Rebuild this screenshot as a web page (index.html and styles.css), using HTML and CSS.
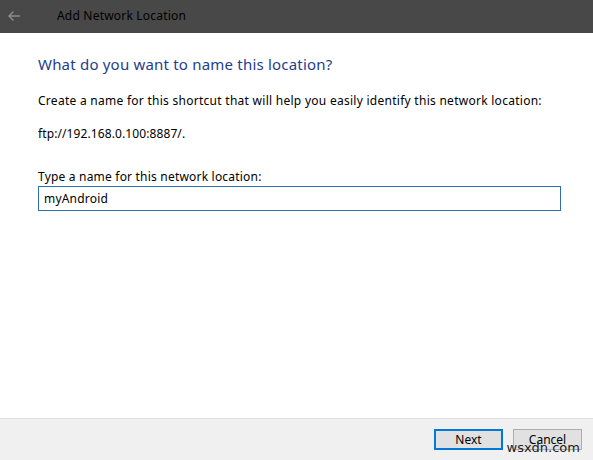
FILE: index.html
```html
<!DOCTYPE html>
<html>
<head>
<meta charset="utf-8">
<link rel="stylesheet" href="styles.css">
</head>
<body>
<div class="window">
  <div class="titlebar">
    <svg class="back" width="14" height="12" viewBox="0 0 14 12">
      <path d="M13 6H2M6.5 1.5L2 6l4.5 4.5" fill="none" stroke="#8c8c8c" stroke-width="1.4"/>
    </svg>
    <span class="title">Add Network Location</span>
  </div>
  <div class="content">
    <h1 class="heading">What do you want to name this location?</h1>
    <p class="text">Create a name for this shortcut that will help you easily identify this network location:</p>
    <p class="text url">ftp://192.168.0.100:8887/.</p>
    <label class="label" for="name">Type a name for this network location:</label>
    <input class="field" id="name" type="text" value="myAndroid">
  </div>
  <div class="footer">
    <button class="btn primary">Next</button>
    <button class="btn">Cancel</button>
    <span class="watermark">wsxdn.com</span>
  </div>
</div>
</body>
</html>
```
FILE: styles.css
```css
html, body {
  margin: 0;
  padding: 0;
  width: 593px;
  height: 460px;
  overflow: hidden;
  background: #ffffff;
}
.window {
  width: 593px;
  height: 460px;
  display: flex;
  flex-direction: column;
  font-family: "Noto Sans", "Open Sans", sans-serif;
  font-size: 12px;
  color: #000;
}
.titlebar {
  height: 33px;
  background: #484848;
  display: flex;
  align-items: center;
  flex-shrink: 0;
}
.back {
  margin-left: 7px;
  margin-top: -2px;
}
.title {
  margin-left: 36px;
  font-size: 12px;
  letter-spacing: 0.2px;
  color: #000;
  margin-top: -2px;
}
.content {
  flex: 1;
  padding: 20px 32px 0 38px;
  display: flex;
  flex-direction: column;
  align-items: flex-start;
}
.heading {
  margin: 0;
  font-size: 15px;
  letter-spacing: 0.2px;
  font-weight: normal;
  color: #1f3d8f;
  line-height: 22px;
}
.text {
  margin: 18px 0 0 0;
  line-height: 16px;
  letter-spacing: 0.27px;
}
.url {
  margin-top: 17px;
  letter-spacing: 0.1px;
}
.label {
  margin-top: 27px;
  line-height: 16px;
  letter-spacing: 0.2px;
}
.field {
  margin: 1px 0 0 0;
  box-sizing: border-box;
  width: 523px;
  height: 25px;
  border: 1px solid #2b6fad;
  padding: 0 5px;
  font-family: inherit;
  font-size: 12px;
  letter-spacing: 0.2px;
  color: #000;
  outline: none;
}
.footer {
  height: 41px;
  flex-shrink: 0;
  background: #f0f0f0;
  border-top: 1px solid #dfdfdf;
  display: flex;
  align-items: center;
  justify-content: flex-end;
  padding-right: 11px;
  gap: 10px;
  position: relative;
}
.btn {
  box-sizing: border-box;
  width: 69px;
  height: 21px;
  background: #e1e1e1;
  border: 1px solid #adadad;
  font-family: inherit;
  font-size: 12px;
  color: #000;
  padding: 0 0 1px 0;
}
.btn.primary {
  border: 2px solid #0078d7;
}
.watermark {
  position: absolute;
  right: 13px;
  bottom: 6px;
  font-family: "DejaVu Sans", sans-serif;
  font-size: 13px;
  color: #222;
  line-height: 1;
}
```
